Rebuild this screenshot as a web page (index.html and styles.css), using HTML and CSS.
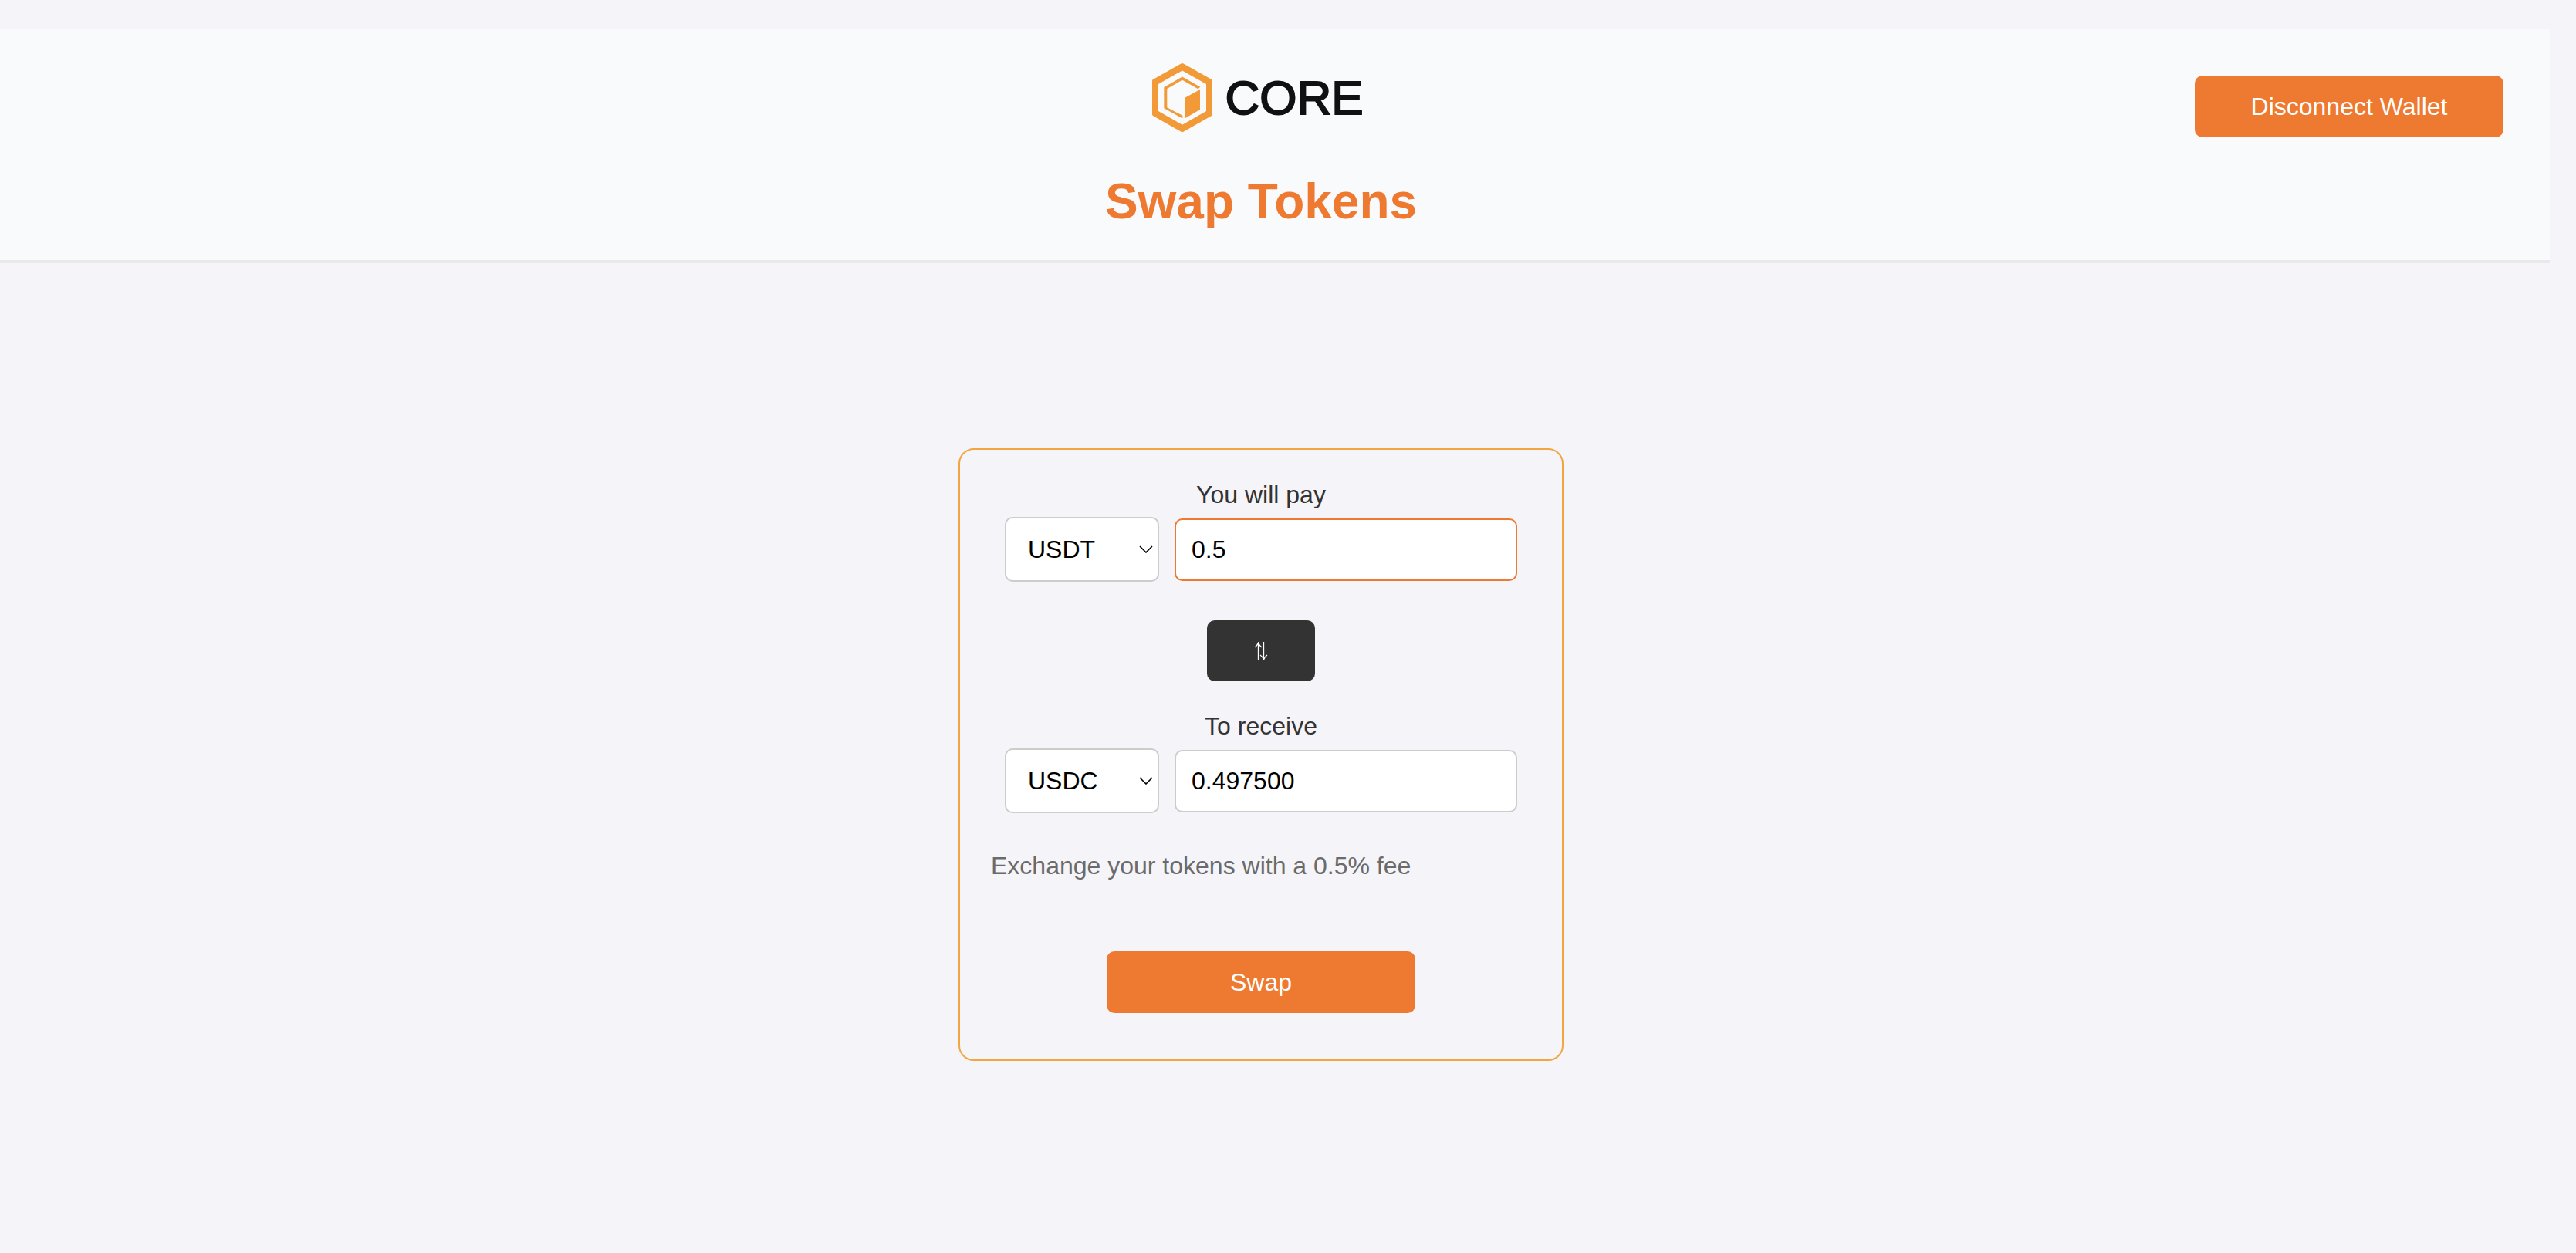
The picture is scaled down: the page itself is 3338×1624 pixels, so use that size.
FILE: index.html
```html
<!DOCTYPE html>
<html lang="en">
<head>
  <meta charset="utf-8">
  <meta name="viewport" content="width=device-width, initial-scale=1">
  <title>Swap Tokens</title>
  <link rel="stylesheet" href="styles.css">
</head>
<body>
  <header class="header">
    <div class="brand">
      <div class="logo">
        <svg class="logo-mark" viewBox="0 0 78 90" aria-hidden="true">
          <path fill-rule="evenodd" d="M37.500 .4Q39-.4 40.500 .4L77 21Q78 21.600 78 22.800V66.200Q78 67.400 77 68L40.500 88.800Q39 89.600 37.500 88.800L1 68Q0 67.400 0 66.200V22.800Q0 21.600 1 21ZM39 9.400L8 27V62L39 79.700L70 62V27Z"/>
          <path d="M39 17.600L62.400 30.800L59.400 33.200L39 21.700L19.300 33V57.300L39.400 67.700V71.600L15.300 58.300V31Z"/>
          <path d="M42.300 44.700L62 34V60L42.300 71.400Z"/>
        </svg>
        <span class="logo-name">CORE</span>
      </div>
      <h1 class="title">Swap Tokens</h1>
    </div>
    <div class="actions">
      <button class="button" type="button">Disconnect Wallet</button>
    </div>
  </header>

  <main class="main">
    <form class="card">
      <label class="label" for="pay-amount">You will pay</label>
      <div class="row">
        <select class="token" aria-label="Token to pay">
          <option selected>USDT</option>
          <option>USDC</option>
        </select>
        <input class="amount amount-active" id="pay-amount" type="text" inputmode="decimal" value="0.5">
      </div>

      <button class="flip" type="button" aria-label="Switch tokens">
        <svg class="flip-icon" viewBox="0 0 18 24" aria-hidden="true">
          <path d="M5.500 24V1M1 7Q4 5 5.500 1Q7 5 10 7M12.500 0V23M8 17Q11 19 12.500 23Q14 19 17 17" stroke-width="1.3"/>
        </svg>
      </button>

      <label class="label" for="receive-amount">To receive</label>
      <div class="row">
        <select class="token" aria-label="Token to receive">
          <option>USDT</option>
          <option selected>USDC</option>
        </select>
        <input class="amount" id="receive-amount" type="text" value="0.497500" readonly>
      </div>

      <p class="fee">Exchange your tokens with a 0.5% fee</p>
      <button class="button" type="button">Swap</button>
    </form>
  </main>
</body>
</html>
```

FILE: styles.css
```css
* {
  box-sizing: border-box;
}

body {
  margin: 0;
  padding-top: 38px;
  background: #f4f4f9;
  color: #333;
  font-family: "Liberation Sans", Arial, sans-serif;
  font-size: 32px;
  line-height: 37px;
}

button,
input,
select {
  font: inherit;
}

.header {
  display: grid;
  grid-template-columns: 1fr auto 1fr;
  margin-right: 34px;
  padding: 44px 60px 39px 24px;
  background: #f9fafc;
  border-bottom: 4px solid #e9e9e9;
}

.brand {
  grid-column: 2;
  display: flex;
  flex-direction: column;
  align-items: center;
  gap: 52px;
}

.logo {
  display: flex;
  align-items: center;
  gap: 16px;
  padding-right: 8px;
}

.logo-mark {
  width: 78px;
  height: 90px;
  fill: #f29a38;
}

.logo-name {
  color: #111;
  font-size: 62px;
  line-height: 74px;
  -webkit-text-stroke: 2px #111;
}

.title {
  margin: 0;
  color: #ee7930;
  font-size: 64px;
  line-height: 74px;
}

.actions {
  display: flex;
  justify-content: flex-end;
  align-items: flex-start;
  padding-top: 16px;
}

.button {
  width: 400px;
  height: 80px;
  border: 0;
  border-radius: 10px;
  background: #ee7930;
  color: #fff;
}

.main {
  display: flex;
  justify-content: center;
  padding: 240px 70px 240px 0;
}

.card {
  display: flex;
  flex-direction: column;
  align-items: center;
  width: 784px;
  padding: 40px 40px 60px;
  border: 2px solid #f2a640;
  border-radius: 20px;
}

.label {
  margin-bottom: 10px;
}

.row {
  display: flex;
  align-items: center;
  align-self: stretch;
  gap: 20px;
  padding: 0 18px;
}

.token {
  width: 200px;
  height: 84px;
  padding: 0 28px;
  border: 2px solid #ccc;
  border-radius: 10px;
  appearance: none;
  background: #fff url("data:image/svg+xml,%3Csvg xmlns='http://www.w3.org/2000/svg' width='18' height='10' fill='none' stroke='%23000' stroke-width='1.6'%3E%3Cpath d='M1 1L9 9L17 1'/%3E%3C/svg%3E") no-repeat right 6px center;
  color: #000;
}

.amount {
  flex: 1;
  min-width: 0;
  padding: 20px;
  height: 81px;
  border: 2px solid #ccc;
  border-radius: 10px;
  background: #fff;
  color: #000;
}

.amount-active {
  border-color: #ee7930;
}

.flip {
  display: flex;
  align-items: center;
  justify-content: center;
  width: 140px;
  height: 79px;
  margin: 50px 0 40px;
  border: 0;
  border-radius: 10px;
  background: #333;
}

.flip-icon {
  width: 18px;
  height: 24px;
  fill: none;
  stroke: #fff;
}

.fee {
  align-self: stretch;
  margin: 50px 0 92px;
  color: #6b6b6b;
}
```
